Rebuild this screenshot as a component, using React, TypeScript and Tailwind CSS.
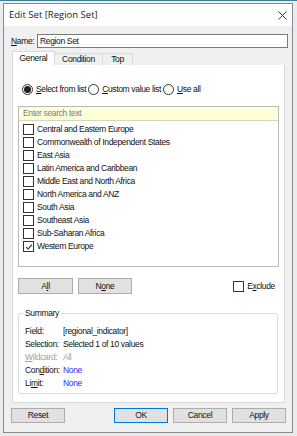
import { useState } from 'react';

const REGIONS = [
  'Central and Eastern Europe',
  'Commonwealth of Independent States',
  'East Asia',
  'Latin America and Caribbean',
  'Middle East and North Africa',
  'North America and ANZ',
  'South Asia',
  'Southeast Asia',
  'Sub-Saharan Africa',
  'Western Europe',
];

function Check({ on }: { on: boolean }) {
  return (
    <span className="flex h-[11px] w-[11px] shrink-0 items-center justify-center border border-[#333] bg-white">
      {on ? (
        <svg viewBox="0 0 10 10" className="h-[8px] w-[8px]" aria-hidden>
          <path d="M1.5 5.2L4 7.6 8.6 2" stroke="#222" strokeWidth="1.3" fill="none" />
        </svg>
      ) : null}
    </span>
  );
}

function Radio({ on, label, u }: { on: boolean; label: string; u: string }) {
  const rest = label.slice(1);
  return (
    <span className="flex items-center gap-[3px]">
      <span className="flex h-[11px] w-[11px] items-center justify-center rounded-full border border-[#333] bg-white">
        {on ? <span className="h-[7px] w-[7px] rounded-full bg-[#222]" /> : null}
      </span>
      <span>
        <span className="underline">{u}</span>
        {rest}
      </span>
    </span>
  );
}

function Btn({ children, primary }: { children: React.ReactNode; primary?: boolean }) {
  return (
    <button
      type="button"
      className={`flex h-[15px] w-[54px] items-center justify-center border bg-[#e1e1e1] text-[#111] ${
        primary ? 'border-[#0078d7]' : 'border-[#adadad]'
      }`}
    >
      {children}
    </button>
  );
}

export default function App() {
  const [checked] = useState<string[]>(['Western Europe']);

  return (
    <div
      className="h-[436px] w-[297px] overflow-hidden border-t border-t-[#3d7f96] bg-[#e9ebed] pl-[3px] pt-[2px] text-[8.5px] leading-none tracking-[-0.35px] text-[#111]"
      style={{ fontFamily: 'Tahoma, "Liberation Sans", Arial, sans-serif' }}
    >
      <div className="flex h-[430px] w-[290px] flex-col border border-[#8a8a8a] bg-[#f0f0f0]">
        {/* title bar */}
        <div className="flex h-[22px] items-center justify-between bg-white pl-[5px] pr-[5px]">
          <span
            className="text-[9.5px] tracking-normal text-[#222]"
            style={{ fontFamily: '"Open Sans", "Liberation Sans", sans-serif' }}
          >
            Edit Set [Region Set]
          </span>
          <svg viewBox="0 0 10 10" className="h-[9px] w-[9px]" aria-hidden>
            <path d="M0.5 0.5L9.5 9.5M9.5 0.5L0.5 9.5" stroke="#222" strokeWidth="1" />
          </svg>
        </div>

        {/* name */}
        <div className="mt-[8px] flex items-center pl-[7px] pr-[4px]">
          <span className="w-[26px]">
            <span className="underline">N</span>ame:
          </span>
          <div className="flex h-[14px] flex-1 items-center border border-[#7a7a7a] bg-white px-[2px]">Region Set</div>
        </div>

        {/* tabs */}
        <div className="mt-[3px] flex items-end pl-[8px]">
          <div className="flex h-[14px] w-[43px] items-center justify-center border border-b-0 border-[#d9d9d9] bg-white">
            General
          </div>
          <div className="flex h-[12px] w-[48px] items-center justify-center border border-b-0 border-l-0 border-[#d9d9d9] bg-[#f0f0f0]">
            Condition
          </div>
          <div className="flex h-[12px] w-[30px] items-center justify-center border border-b-0 border-l-0 border-[#d9d9d9] bg-[#f0f0f0]">
            Top
          </div>
        </div>

        {/* panel */}
        <div className="ml-[8px] flex h-[338px] w-[273px] flex-col border border-t-0 border-[#d9d9d9] bg-white px-[5px]">
          <div className="mt-[19px] flex items-center gap-[2px] pl-[4px]">
            <Radio on label="Select from list" u="S" />
            <Radio on={false} label="Custom value list" u="C" />
            <Radio on={false} label="Use all" u="U" />
          </div>

          <div className="mt-[11px] flex h-[161px] w-[261px] flex-col border border-[#b9b9b9]">
            <div className="flex h-[14px] items-center border-b border-[#d6d6c0] bg-[#ffffd7] pl-[4px] text-[#7d7d7d]">
              Enter search text
            </div>
            <div className="flex flex-col pt-[2px]">
              {REGIONS.map((r) => (
                <div key={r} className="flex h-[13px] items-center gap-[3px] pl-[4px]">
                  <Check on={checked.includes(r)} />
                  <span>{r}</span>
                </div>
              ))}
            </div>
          </div>

          <div className="mt-[11px] flex items-center">
            <div className="flex h-[16px] w-[55px] items-center justify-center border border-[#adadad] bg-[#e1e1e1]">
              A<span className="underline">l</span>l
            </div>
            <div className="ml-[5px] flex h-[16px] w-[54px] items-center justify-center border border-[#adadad] bg-[#e1e1e1]">
              N<span className="underline">o</span>ne
            </div>
            <div className="ml-auto mr-[4px] flex items-center gap-[3px]">
              <Check on={false} />
              <span>
                E<span className="underline">x</span>clude
              </span>
            </div>
          </div>

          <div className="relative mt-[19px] h-[81px] w-[260px] rounded-[2px] border border-[#dcdcdc]">
            <span className="absolute left-[4px] top-[-5px] bg-white px-[2px]">Summary</span>
            <div className="mt-[13px] grid grid-cols-[38px_1fr] gap-y-[4.5px] pl-[6px]">
              <span>Field:</span>
              <span>[regional_indicator]</span>
              <span>Selection:</span>
              <span>Selected 1 of 10 values</span>
              <span className="text-[#a0a0a0]">
                <span className="underline">W</span>ildcard:
              </span>
              <span className="text-[#a0a0a0]">All</span>
              <span>
                Con<span className="underline">d</span>ition:
              </span>
              <span className="text-[#2b2bff]">None</span>
              <span>
                Li<span className="underline">m</span>it:
              </span>
              <span className="text-[#2b2bff]">None</span>
            </div>
          </div>
        </div>

        {/* footer */}
        <div className="mt-[5px] flex items-center pl-[7px] pr-[6px]">
          <Btn>Reset</Btn>
          <div className="ml-auto flex gap-[5px]">
            <Btn primary>OK</Btn>
            <Btn>Cancel</Btn>
            <Btn>Apply</Btn>
          </div>
        </div>
      </div>
    </div>
  );
}
